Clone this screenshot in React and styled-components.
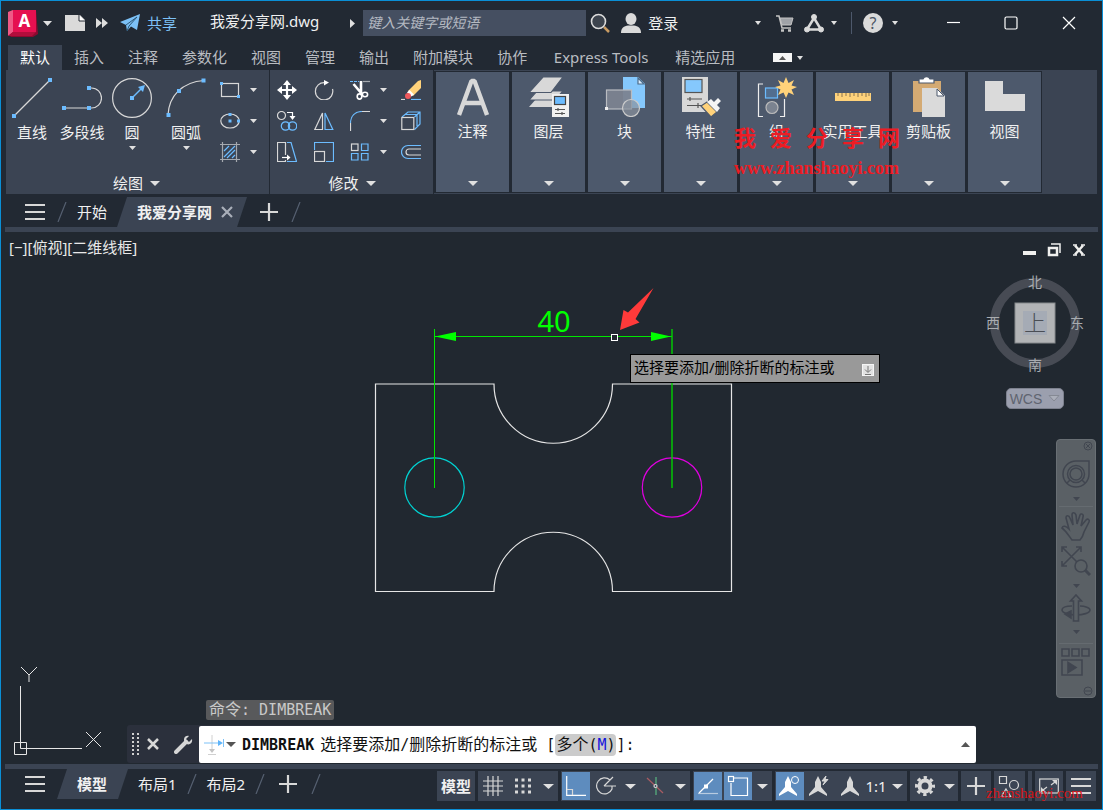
import styled, { createGlobalStyle } from "styled-components";

const GlobalStyle = createGlobalStyle`
  * {
    box-sizing: border-box;
  }
  body {
    margin: 0;
    background-color: #222933;
  }
  button, input {
    font: inherit;
    color: inherit;
    border: none;
    background: none;
    padding: 0;
    margin: 0;
  }
  svg {
    display: block;
    flex: none;
  }
`;

const Window = styled.div`
  min-height: 100vh;
  display: flex;
  flex-direction: column;
  border: 1px solid #0a8fd6;
  background-color: #222933;
  color: #f0f0f0;
  font-family: "Noto Sans", "Noto Sans CJK SC", sans-serif;
  font-size: 15px;
  line-height: 20px;
`;

/* title bar */
const TitleBar = styled.header`
  height: 44px;
  display: flex;
  align-items: center;
  padding: 0 4px 0 7px;
`;
const IconButton = styled.button`
  width: ${(props) => props.$width || 20}px;
  height: ${(props) => props.$height || 30}px;
  flex: none;
  display: flex;
  align-items: center;
  justify-content: center;
`;
const MenuButton = styled(IconButton)`
  padding-left: 12px;
`;
const ShareButton = styled.button`
  display: flex;
  align-items: center;
  gap: 7px;
  padding-left: 10px;
  color: #7cc1f7;
  white-space: nowrap;
`;
const FileName = styled.h1`
  margin: 0 27px 0 33px;
  padding-bottom: 4px;
  font-size: 15px;
  font-weight: 400;
  line-height: 20px;
  white-space: nowrap;
`;
const SearchInput = styled.input`
  flex: 0 1 223px;
  min-width: 80px;
  height: 26px;
  margin: 0 4px 0 5px;
  padding: 0 4px 2px;
  background-color: #454f61;
  font-size: 14px;

  &::placeholder {
    color: #b4b9c1;
    font-style: italic;
    opacity: 1;
  }
`;
const LoginButton = styled.button`
  display: flex;
  align-items: center;
  gap: 7px;
  margin-left: 11px;
  white-space: nowrap;
`;
const TitleRight = styled.div`
  margin-left: auto;
  display: flex;
  align-items: center;
`;
const TitleDivider = styled.span`
  width: 1px;
  height: 22px;
  margin: 0 8px;
  background-color: #4d586b;
`;
const WindowButtons = styled.div`
  display: flex;
  margin-left: 20px;
`;

/* ribbon */
const TabRow = styled.nav`
  height: 25px;
  display: flex;
  align-items: stretch;
  padding-left: 7px;
`;
const RibbonTab = styled.button`
  min-width: ${(props) => (props.$wide ? 124 : 0)}px;
  padding: 0 12px 2px;
  color: ${(props) => (props.$active ? "#ffffff" : "#b9bcc1")};
  background-color: ${(props) => (props.$active ? "#3b4453" : "transparent")};
  white-space: nowrap;
`;
const TabTools = styled.div`
  display: flex;
  align-items: center;
  margin-left: 26px;
`;
const CollapseButton = styled.button`
  width: 19px;
  height: 9px;
  display: flex;
  align-items: center;
  justify-content: center;
  background-color: #f5f5f5;
`;
const Ribbon = styled.section`
  position: relative;
  height: 124px;
  margin: 0 5px;
  display: flex;
  background-color: #3b4453;
`;
const Panel = styled.div`
  display: flex;
  flex-direction: column;
  justify-content: space-between;
  padding: 8px ${(props) => props.$right}px 3px ${(props) => props.$left}px;
  border-right: 1px solid #222933;
`;
const PanelTools = styled.div`
  display: flex;
`;
const PanelTitle = styled.button`
  display: flex;
  align-items: center;
  justify-content: center;
  gap: 7px;
  padding-left: 6px;
`;
const BigTool = styled.button`
  width: ${(props) => props.$width}px;
  display: flex;
  flex-direction: column;
  align-items: center;
  justify-content: flex-start;
  white-space: nowrap;

  span {
    margin: 4px 0;
  }
`;
const ToolGrid = styled.div`
  display: grid;
  grid-template-columns: ${(props) => props.$columns};
  grid-auto-rows: 31px;
  margin-left: ${(props) => props.$offset || 0}px;
  margin-top: 2px;
`;
const SmallTool = styled.button`
  display: flex;
  align-items: flex-start;

  svg + svg {
    margin: 8px 0 0 10px;
  }
`;
const GroupButton = styled.button`
  width: 76px;
  margin: 1px 0;
  padding: 5px 0 6px;
  display: flex;
  flex-direction: column;
  align-items: center;
  background-color: #4d596c;
  border: solid #222933;
  border-width: 1px 1px 1px 2px;
  white-space: nowrap;

  span {
    margin-top: 4px;
  }
  svg:last-child {
    margin-top: auto;
  }
`;
const RibbonMark = styled.div`
  position: absolute;
  top: 55px;
  left: 728px;
  color: #ee1c24;
  font-weight: 700;
  pointer-events: none;
`;
const MarkTitle = styled.div`
  display: flex;
  gap: 14px;
  font-size: 22px;
  line-height: 24px;
`;
const MarkUrl = styled.div`
  margin-top: 9px;
  font-family: "Liberation Serif", serif;
  font-size: 18px;
`;

/* document tabs */
const DocTabs = styled.nav`
  display: flex;
  align-items: center;
  padding-top: ${(props) => props.$top || 0}px;
`;
const SlantTab = styled.div`
  height: 30px;
  display: flex;
  align-items: center;
  gap: 9px;
  padding: 0 ${(props) => props.$right}px 0 20px;
  background-color: #3b4453;
  font-weight: 700;
  clip-path: polygon(10px 0, 100% 0, calc(100% - 10px) 100%, 0 100%);
`;
const PlainTab = styled.button`
  margin: 0 10px;
  white-space: nowrap;
`;
const Strip = styled.div`
  height: 5px;
  margin: 0 4px;
  background-color: #3b4453;
`;

/* drawing area */
const Canvas = styled.main`
  position: relative;
  flex: 1;
  min-height: 532px;
  background-color: #212830;
  overflow: hidden;
`;
const ViewLabel = styled.div`
  padding: 5px 8px;
  color: #e8e8e8;
`;
const Drawing = styled.svg`
  position: absolute;
  left: 359px;
  top: 48px;
`;
const Tooltip = styled.div`
  position: absolute;
  left: 629px;
  top: 122px;
  height: 29px;
  display: flex;
  align-items: center;
  gap: 27px;
  padding: 0 5px 4px 3px;
  border: 1px solid #000;
  background-color: #999;
  color: #000;
  white-space: nowrap;

  svg {
    margin-top: 7px;
  }
`;
const ViewControls = styled.div`
  position: absolute;
  top: 7px;
  right: 11px;
  display: flex;
`;
const ViewCube = styled.div`
  position: absolute;
  top: 40px;
  right: 13px;
  display: flex;
  flex-direction: column;
  align-items: center;
  gap: 12px;
`;
const WcsButton = styled.button`
  width: 58px;
  height: 21px;
  display: flex;
  align-items: center;
  justify-content: center;
  gap: 6px;
  border: 1px solid #7d818e;
  border-radius: 5px;
  background-color: #9b9fae;
  color: #5f6470;
  font-family: "Liberation Sans", sans-serif;
  font-size: 14px;
  line-height: 18px;
`;
const NavBar = styled.aside`
  position: absolute;
  top: 207px;
  right: 6px;
  width: 40px;
  height: 259px;
  display: flex;
  flex-direction: column;
  align-items: center;
  border: 1px solid #696f74;
  border-radius: 4px;
  background-color: #5a6065;
`;
const NavLine = styled.span`
  width: 34px;
  height: 1px;
  margin: 3px 0;
  background-color: #656b70;
`;
const NavEnd = styled.div`
  align-self: flex-end;
  margin-top: ${(props) => (props.$bottom ? "auto" : 0)};
`;
const Ucs = styled.svg`
  position: absolute;
  left: 11px;
  bottom: 4px;
`;
const CommandArea = styled.div`
  position: absolute;
  left: 126px;
  right: 126px;
  bottom: 1px;
  font-family: "DejaVu Sans Mono", "Noto Sans CJK SC", monospace;
`;
const History = styled.div`
  width: max-content;
  margin: 0 0 5px 79px;
  padding: 0 3px;
  border-radius: 2px;
  background-color: #58595b;
  color: #c9c9c9;
`;
const CommandBar = styled.div`
  display: flex;
  height: 38px;
  border-radius: 3px;
  background-color: #2b303c;
`;
const CommandGrip = styled.div`
  width: 72px;
  flex: none;
  display: flex;
  align-items: center;
  padding-left: 5px;
`;
const CommandLine = styled.label`
  flex: 1;
  min-width: 0;
  margin-top: 1px;
  display: flex;
  align-items: center;
  padding: 0 5px;
  border-radius: 2px;
  background-color: #fff;
  color: #111;
  white-space: pre;
`;
const CommandName = styled.b`
  margin-left: 4px;
`;
const Prompt = styled.span`
  margin-left: 6px;
`;
const Cjk = styled.span`
  font-size: 16px;
`;
const Option = styled.button`
  height: 22px;
  padding: 0 1px;
  border-radius: 4px;
  background-color: #cbcbcb;

  b {
    color: #1414dc;
    font-weight: 400;
  }
`;
const CommandInput = styled.input`
  flex: 1;
  min-width: 20px;
  outline: none;
`;

/* status bar */
const StatusBar = styled.footer`
  height: 40px;
  display: flex;
  align-items: flex-start;
  position: relative;
`;
const StatusTools = styled.div`
  display: flex;
  gap: 3px;
  margin: 2px 6px 0 auto;
`;
const StatusGroup = styled.div`
  width: ${(props) => props.$width}px;
  height: 30px;
  display: flex;
  align-items: center;
  justify-content: space-between;
  background-color: #3b4453;
`;
const StatusButton = styled.button`
  width: ${(props) => props.$width || 30}px;
  height: 30px;
  display: flex;
  align-items: center;
  justify-content: center;
  border: 1px solid #3b4453;
  background-color: ${(props) => (props.$active ? "#5e8cbe" : "transparent")};
  font-weight: ${(props) => (props.$bold ? 700 : 400)};
  white-space: nowrap;
`;
const CornerMark = styled.div`
  position: absolute;
  right: 19px;
  top: 14px;
  color: #d81418;
  font-family: "Liberation Serif", serif;
  font-size: 15px;
  pointer-events: none;
`;

const BLUE = "#6cbcff";
const GREY = "#d8d8d8";

const Caret = ({ w = 7, h = 4, color = "#e0e0e0" }) => (
  <svg width={w} height={h} viewBox="0 0 10 5" preserveAspectRatio="none">
    <path d="M0 0H10L5 5Z" fill={color} />
  </svg>
);
const BigCaret = () => <Caret w={11} h={5} />;
const Icon = ({ size = 20, w, h, children }) => (
  <svg width={w || size} height={h || size} fill="none" stroke={GREY} strokeWidth="1.2">
    {children}
  </svg>
);
const Dot = ({ x, y, s = 4 }) => (
  <rect x={x - s / 2} y={y - s / 2} width={s} height={s} fill={BLUE} stroke="none" />
);
const Menu = () => (
  <Icon w={20} h={16}>
    <path d="M0 1H20M0 8H20M0 15H20" strokeWidth="2" />
  </Icon>
);
const Plus = () => (
  <Icon>
    <path d="M10 1V19M1 10H19" strokeWidth="2.2" />
  </Icon>
);
const Slash = () => (
  <Icon w={10} h={20}>
    <path d="M9 0L1 20" stroke="#566071" />
  </Icon>
);

const drawTools = [
  {
    label: "直线",
    width: 50,
    icon: (
      <Icon size={40}>
        <path d="M2 38L38 2" />
        <Dot x={2} y={38} />
        <Dot x={38} y={2} />
      </Icon>
    ),
  },
  {
    label: "多段线",
    width: 50,
    icon: (
      <Icon size={40}>
        <path d="M2 30H29.500A10 10 0 0 0 29.500 10H27" />
        <Dot x={2} y={30} />
        <Dot x={27} y={30} />
        <Dot x={27} y={10} />
      </Icon>
    ),
  },
  {
    label: "圆",
    width: 50,
    menu: true,
    icon: (
      <Icon size={40}>
        <circle cx="20" cy="20" r="19.400" />
        <path d="M20 20L29 11" stroke={BLUE} strokeWidth="1.500" />
        <path d="M33 7L26 9L31 14Z" fill={BLUE} stroke="none" />
        <Dot x={20} y={20} />
      </Icon>
    ),
  },
  {
    label: "圆弧",
    width: 58,
    menu: true,
    icon: (
      <Icon size={40}>
        <path d="M2 37C3 18 16 4 38 2.500" />
        <Dot x={2.500} y={37} />
        <Dot x={13} y={13} />
        <Dot x={37.500} y={2.500} />
      </Icon>
    ),
  },
];

const shapeTools = [
  {
    label: "矩形",
    icon: (
      <Icon>
        <rect x="1.500" y="3.500" width="17" height="13" />
        <Dot x={1.500} y={3.500} s={3} />
        <Dot x={18.500} y={16.500} s={3} />
      </Icon>
    ),
  },
  {
    label: "椭圆",
    icon: (
      <Icon>
        <ellipse cx="10" cy="10" rx="9.200" ry="7" />
        <Dot x={10} y={3.500} s={3} />
        <Dot x={10} y={10} s={3} />
        <Dot x={18.500} y={10} s={3} />
      </Icon>
    ),
  },
  {
    label: "图案填充",
    icon: (
      <Icon>
        <path d="M2.500 0V20M16.500 0V20M0 2.500H20M0 17.500H20" stroke="#a5a9af" />
        <path d="M4 9L9 4M4 15L15 4M7 16L15 8M12 16L15 13" stroke={BLUE} />
      </Icon>
    ),
  },
];

const modifyTools = [
  {
    label: "移动",
    icon: (
      <Icon>
        <path d="M10 3V17M3 10H17" stroke="#fff" strokeWidth="2.200" />
        <path d="M10 0L14 5H6ZM10 20L6 15H14ZM0 10L5 6V14ZM20 10L15 14V6Z" fill="#fff" stroke="none" />
      </Icon>
    ),
  },
  {
    label: "旋转",
    icon: (
      <Icon>
        <path d="M18.500 9A8.700 8.700 0 1 1 11 2.600" />
        <path d="M10 0L15 2.600L10 5.500Z" fill="#fff" stroke="none" />
      </Icon>
    ),
  },
  {
    label: "修剪",
    menu: true,
    icon: (
      <Icon>
        <path d="M0 1.500H9" stroke={BLUE} strokeDasharray="3 1" />
        <path d="M13 1.500H20" stroke="#a5a9af" />
        <path d="M3.500 4L12 14M11 1V13" stroke="#fff" strokeWidth="2.600" />
        <ellipse cx="9.500" cy="16.500" rx="2.300" ry="2.600" stroke="#fff" strokeWidth="1.600" />
        <ellipse cx="15" cy="14.500" rx="2.600" ry="2.200" stroke="#fff" strokeWidth="1.600" />
      </Icon>
    ),
  },
  {
    label: "删除",
    icon: (
      <Icon>
        <path d="M0 19.500H4" />
        <path d="M10 19.500H20" stroke={BLUE} />
        <path d="M20 0V8L12 16L7 11L17 1Z" fill="#ffd27a" stroke="none" />
        <path d="M8.500 10L13 14.500L10.500 16.500L6 12.500Z" fill="#fff" stroke="none" />
        <circle cx="7" cy="16" r="3" fill="#f0595c" stroke="none" />
      </Icon>
    ),
  },
  {
    label: "复制",
    icon: (
      <Icon>
        <circle cx="4.500" cy="4.500" r="4" />
        <path d="M10 1.500H15.500V6" stroke="#fff" />
        <path d="M12.500 5H18.500L15.500 9Z" fill="#fff" stroke="none" />
        <circle cx="8.500" cy="15" r="4.200" stroke={BLUE} />
        <circle cx="15.500" cy="15" r="4.200" stroke={BLUE} />
      </Icon>
    ),
  },
  {
    label: "镜像",
    icon: (
      <Icon>
        <path d="M8.500 2V18.500H.8Z" />
        <path d="M11 2V18.500H18.800Z" stroke={BLUE} />
      </Icon>
    ),
  },
  {
    label: "圆角",
    menu: true,
    icon: (
      <Icon>
        <path d="M.5 20V12M12 .5H20" />
        <path d="M.5 12C.5 5 5 .5 12 .5" stroke={BLUE} />
      </Icon>
    ),
  },
  {
    label: "分解",
    icon: (
      <Icon>
        <path d="M1 6L7 1H19V13L13.500 18.500M13.500 6L19 1M16 4V15M4 3.500H16" stroke={BLUE} />
        <rect x=".8" y="6.500" width="12" height="12" />
      </Icon>
    ),
  },
  {
    label: "拉伸",
    icon: (
      <Icon>
        <path d="M8.500 13V.5H.5V19.500H8.500V18" />
        <path d="M10 .5H14L19.500 19.500H10" stroke={BLUE} />
        <path d="M5 15.500H11" stroke="#fff" />
        <path d="M10 12.500L13.500 15.500L10 18.500Z" fill="#fff" stroke="none" />
      </Icon>
    ),
  },
  {
    label: "缩放",
    icon: (
      <Icon>
        <path d="M.5 8V.5H19.500V19.500H12" stroke={BLUE} />
        <rect x=".5" y="9.500" width="10" height="10" />
      </Icon>
    ),
  },
  {
    label: "阵列",
    menu: true,
    icon: (
      <Icon>
        <rect x="1.500" y="2" width="6.500" height="6.500" />
        <path d="M11.500 2H18V8.500H11.500ZM1.500 11.500H8V18H1.500ZM11.500 11.500H18V18H11.500Z" stroke={BLUE} />
      </Icon>
    ),
  },
  {
    label: "偏移",
    icon: (
      <Icon>
        <path d="M20 3.500H7A6.500 6.500 0 0 0 7 16.500H20" stroke={BLUE} />
        <path d="M20 7H8A3 3 0 0 0 8 13H20" />
      </Icon>
    ),
  },
];

const groups = [
  {
    label: "注释",
    icon: (
      <Icon size={40}>
        <path d="M6 38L18.500 4H21.500L34 38M10 26H30" strokeWidth="4.400" strokeLinejoin="bevel" />
      </Icon>
    ),
  },
  {
    label: "图层",
    icon: (
      <Icon size={40}>
        <g fill={GREY} stroke="none">
          <path d="M0 30L8 21H33L24 30Z" />
          <path d="M0 23L8 14H34L26 23Z" stroke="#4d596c" />
          <path d="M0 15.500L14 0H34L22 15.500Z" stroke="#4d596c" />
        </g>
        <rect x="23" y="17" width="17" height="23" fill="#f1f1f1" stroke="none" />
        <rect x="25.500" y="19.500" width="11" height="8" fill={BLUE} stroke="#444" />
        <path d="M26 32.500H36M26 36.500H36M29 31V34M33 35V38" stroke="#555" />
      </Icon>
    ),
  },
  {
    label: "块",
    icon: (
      <Icon size={40}>
        <path d="M18 0H33L40 7V31H18Z" fill="#85c8fd" stroke="none" />
        <path d="M33 1V7H39Z" fill="#d9edff" stroke="#4d6b88" />
        <rect x="1.500" y="13" width="25" height="19" fill="#7b8390" fillOpacity=".95" stroke="#b9bcc1" />
        <circle cx="26" cy="31" r="8.500" fill="#89919c" fillOpacity=".7" stroke="#ccc" />
        <rect x="0" y="30" width="3" height="3" fill="#eee" stroke="none" />
      </Icon>
    ),
  },
  {
    label: "特性",
    icon: (
      <Icon size={40}>
        <rect x="1" y="0" width="26" height="35" fill={GREY} stroke="none" />
        <rect x="4" y="2.500" width="17" height="13" fill="#85c8fd" stroke="#555" />
        <path d="M6 22H21M6 28.500H21M9 20V24M17 26V31" stroke="#555" />
        <path d="M20 29L26 25L36 35L30 40Z" fill="#ffd27a" stroke="#4d596c" />
        <path d="M26 25L30 22L33 25L37 21L40 24L36 28L39 31L36 35Z" fill="#f4f4f4" stroke="none" />
      </Icon>
    ),
  },
  {
    label: "组",
    icon: (
      <Icon size={40}>
        <path d="M6 7H1.500V39.500H6M23 39.500H27.500V22" stroke="#eee" />
        <rect x="8.500" y="11" width="12" height="10" fill="#526e8f" stroke={BLUE} />
        <circle cx="15" cy="30.500" r="6" fill="#7b8390" stroke="#bbb" />
        <path d="M29 0L31.500 6L37 3L34.500 8.500L40 10L34.500 12.500L37 18L31.500 15.500L29 21L26.500 15.500L21 18L23.500 12.500L18 10L23.500 8.500L21 3L26.500 6Z" fill="#ffd27a" stroke="none" />
      </Icon>
    ),
  },
  {
    label: "实用工具",
    icon: (
      <Icon size={40}>
        <rect x="2" y="16" width="36" height="8" fill="#ffd27a" stroke="none" />
        <path d="M5 16V19M9 16V20M13 16V19M17 16V20M21 16V19M25 16V20M29 16V19M33 16V20M36 16V19" stroke="#8b7550" strokeWidth="1" />
      </Icon>
    ),
  },
  {
    label: "剪贴板",
    icon: (
      <Icon size={40}>
        <rect x="4" y="4" width="28" height="31" fill="#d4aa73" stroke="none" />
        <path d="M10 6V2H14C15 -1 20 -1 21 2H25V6Z" fill="#fff" stroke="#4d596c" />
        <path d="M13 11H28L36 19V40H13Z" fill="#dadada" stroke="none" />
        <path d="M28 12V19H35Z" fill="#fff" stroke="#4d596c" strokeWidth="1" />
      </Icon>
    ),
  },
  {
    label: "视图",
    icon: (
      <Icon size={40}>
        <path d="M0 4H18V17H40V34H0Z" fill="#dadada" stroke="none" />
      </Icon>
    ),
  },
];

const tabs = ["默认", "插入", "注释", "参数化", "视图", "管理", "输出", "附加模块", "协作", "Express Tools", "精选应用"];

const Title = () => (
  <TitleBar>
    <IconButton $width={30} aria-label="应用程序菜单">
      <svg width="30" height="28">
        <path d="M5 1H28L30 25L25 28H3L0 25V3Z" fill="#8d0930" />
        <path d="M0 3L5 1V23L0 27Z" fill="#ef5a86" />
        <path d="M0 27L5 23H28L24 27Z" fill="#b30d3c" />
        <rect x="5" y="1" width="23" height="22" fill="#e51050" />
        <text x="16.500" y="18" fill="#fff" fontSize="17" fontWeight="700" textAnchor="middle">
          A
        </text>
      </svg>
    </IconButton>
    <IconButton $width={18} aria-label="展开">
      <Caret w={9} h={5} />
    </IconButton>
    <IconButton $width={38} aria-label="新建">
      <svg width="20" height="16">
        <path d="M0 0H15L20 5V16H0Z" fill="#dadada" />
        <path d="M14 0V6H20" fill="#fff" stroke="#222933" />
      </svg>
    </IconButton>
    <IconButton $width={16} aria-label="更多">
      <svg width="12" height="10">
        <path d="M0 0L6 5L0 10ZM6 0L12 5L6 10Z" fill="#ddd" />
      </svg>
    </IconButton>
    <ShareButton>
      <svg width="20" height="18">
        <path d="M0 8L20 0L17 16L11 12.500L7 17L6 11Z" fill="#7cc1f7" />
        <path d="M6 11L17 3L9 12L7 17" fill="none" stroke="#2d5878" />
      </svg>
      共享
    </ShareButton>
    <FileName>我爱分享网.dwg</FileName>
    <IconButton $width={12} aria-label="展开搜索">
      <svg width="5" height="9">
        <path d="M0 0L5 4.500L0 9Z" fill="#e0e0e0" />
      </svg>
    </IconButton>
    <SearchInput type="text" placeholder="键入关键字或短语" aria-label="搜索" />
    <IconButton aria-label="搜索">
      <svg width="20" height="20" fill="none">
        <path d="M14 14L19 19" stroke="#c99b62" strokeWidth="2.500" />
        <circle cx="8.500" cy="8.500" r="7" fill="#3d444e" stroke="#dcdcdc" strokeWidth="1.600" />
      </svg>
    </IconButton>
    <LoginButton>
      <svg width="20" height="20" fill="#dadada">
        <ellipse cx="10" cy="6" rx="5.500" ry="6" />
        <path d="M0 20C0 15 3 13 7 12.500H13C17 13 20 15 20 20Z" />
      </svg>
      登录
    </LoginButton>
    <TitleRight>
      <IconButton $width={18} aria-label="登录选项">
        <Caret w={6} h={4} />
      </IconButton>
      <IconButton $width={36} aria-label="应用商店">
        <svg width="18" height="17" fill="none" stroke="#c4c4c4">
          <path d="M0 1H3L6 13H15" strokeWidth="1.500" />
          <path d="M4 3H17L15 10H6Z" fill="#a0a3a8" />
          <path d="M5 15.500H8M12 15.500H15" strokeWidth="2.500" />
        </svg>
      </IconButton>
      <IconButton $width={22} aria-label="Autodesk App">
        <svg width="20" height="19" fill="#dadada" stroke="#dadada">
          <path d="M10 4L3 15.500H17Z" fill="none" strokeWidth="2.500" />
          <circle cx="10" cy="3" r="2.500" />
          <circle cx="3" cy="15.500" r="2.500" />
          <circle cx="17" cy="15.500" r="2.500" />
        </svg>
      </IconButton>
      <IconButton $width={18} aria-label="展开">
        <Caret w={6} h={4} />
      </IconButton>
      <TitleDivider />
      <IconButton $width={26} aria-label="帮助">
        <svg width="20" height="20">
          <circle cx="10" cy="10" r="10" fill="#dadada" />
          <text x="10" y="16" fill="#4b5563" fontSize="16" textAnchor="middle">
            ?
          </text>
        </svg>
      </IconButton>
      <IconButton $width={18} aria-label="帮助选项">
        <Caret w={6} h={4} />
      </IconButton>
      <WindowButtons>
        <IconButton $width={58} aria-label="最小化">
          <Icon size={14}>
            <path d="M1 6.500H14" stroke="#fff" />
          </Icon>
        </IconButton>
        <IconButton $width={58} aria-label="最大化">
          <Icon size={14}>
            <rect x="1" y="1" width="12" height="12" rx="1.500" stroke="#fff" />
          </Icon>
        </IconButton>
        <IconButton $width={58} aria-label="关闭">
          <Icon size={14}>
            <path d="M1 1L13 13M13 1L1 13" stroke="#fff" />
          </Icon>
        </IconButton>
      </WindowButtons>
    </TitleRight>
  </TitleBar>
);

const RibbonArea = () => (
  <Ribbon>
    <Panel $left={1} $right={9}>
      <PanelTools>
        {drawTools.map((tool) => (
          <BigTool key={tool.label} $width={tool.width}>
            {tool.icon}
            <span>{tool.label}</span>
            {tool.menu && <Caret />}
          </BigTool>
        ))}
        <ToolGrid $columns="40px" $offset={5}>
          {shapeTools.map((tool) => (
            <SmallTool key={tool.label} aria-label={tool.label}>
              {tool.icon}
              <Caret />
            </SmallTool>
          ))}
        </ToolGrid>
      </PanelTools>
      <PanelTitle>
        绘图
        <Caret w={10} h={5} />
      </PanelTitle>
    </Panel>
    <Panel $left={7} $right={12}>
      <ToolGrid $columns="37px 36px 51px 20px">
        {modifyTools.map((tool) => (
          <SmallTool key={tool.label} aria-label={tool.label}>
            {tool.icon}
            {tool.menu && <Caret />}
          </SmallTool>
        ))}
      </ToolGrid>
      <PanelTitle>
        修改
        <Caret w={10} h={5} />
      </PanelTitle>
    </Panel>
    {groups.map((group) => (
      <GroupButton key={group.label}>
        {group.icon}
        <span>{group.label}</span>
        <Caret w={10} h={5} />
      </GroupButton>
    ))}
    <RibbonMark>
      <MarkTitle>
        <span>我</span>
        <span>爱</span>
        <span>分</span>
        <span>享</span>
        <span>网</span>
      </MarkTitle>
      <MarkUrl>www.zhanshaoyi.com</MarkUrl>
    </RibbonMark>
  </Ribbon>
);

const NAV = "#414650";

const Navigation = () => (
  <NavBar>
    <NavEnd>
      <IconButton $width={14} $height={12} aria-label="关闭导航栏">
        <svg width="10" height="10" fill="none" stroke={NAV}>
          <circle cx="5" cy="5" r="4" />
          <path d="M3 3L7 7M7 3L3 7" />
        </svg>
      </IconButton>
    </NavEnd>
    <IconButton $width={36} $height={43} aria-label="全导航控制盘">
      <svg width="28" height="28" fill="none" stroke={NAV} strokeWidth="1.500">
        <path d="M14 1H27V14A13 13 0 1 1 14 1Z" />
        <circle cx="14" cy="14" r="8.500" />
        <circle cx="14" cy="14" r="6" />
        <path d="M5 23L8 20M23 23L20 20" />
      </svg>
    </IconButton>
    <IconButton $width={36} $height={8} aria-label="控制盘选项">
      <Caret w={7} h={4} color={NAV} />
    </IconButton>
    <NavLine />
    <IconButton $width={36} $height={32} aria-label="平移">
      <svg width="30" height="30" fill="none" stroke={NAV} strokeWidth="1.600">
        <path d="M11 29C8 25 5 20 1 17C2 14 5 15 8 18L5 7C5 4 8 4 9 7L12 14L11 4C11 1 14 1 15 4L16 13L19 4C20 2 23 3 22 6L20 15L25 9C27 7 29 9 28 11L23 21C22 25 21 27 19 29Z" />
      </svg>
    </IconButton>
    <IconButton $width={36} $height={38} aria-label="范围缩放">
      <svg width="30" height="30" fill="none" stroke={NAV} strokeWidth="1.600">
        <path d="M1 1L20 20M20 1L1 20M1 6V1H6M15 1H20V6M1 15V20H6" />
        <circle cx="20" cy="20" r="6" fill="#5a6065" />
        <path d="M24 24L29 29" strokeWidth="3" />
      </svg>
    </IconButton>
    <IconButton $width={36} $height={12} aria-label="缩放选项">
      <Caret w={7} h={4} color={NAV} />
    </IconButton>
    <IconButton $width={36} $height={32} aria-label="动态观察">
      <svg width="30" height="28" fill="none" stroke={NAV} strokeWidth="1.600">
        <path d="M11 12C4 12 1 14 1 16C1 19 9 21 15 21C22 21 29 19 29 16C29 14 24 12 19 12" />
        <path d="M12.500 27V7H9.500L15 1L20.500 7H17.500V27Z" fill="#5a6065" />
        <path d="M10 17L4 20L10 24Z" fill={NAV} />
      </svg>
    </IconButton>
    <IconButton $width={36} $height={16} aria-label="动态观察选项">
      <Caret w={7} h={4} color={NAV} />
    </IconButton>
    <NavLine />
    <IconButton $width={36} $height={30} aria-label="ShowMotion">
      <svg width="30" height="30" fill="none" stroke={NAV} strokeWidth="1.600">
        <path d="M1 2H8V9H1ZM11 2H18V9H11ZM21 2H28V9H21ZM1 13H21V28H1Z" />
        <path d="M7 15.500L15 20.500L7 25.500Z" fill={NAV} />
      </svg>
    </IconButton>
    <NavEnd $bottom>
      <IconButton $width={14} $height={12} aria-label="导航栏选项">
        <svg width="10" height="10" fill="none" stroke={NAV}>
          <circle cx="5" cy="5" r="4" />
          <path d="M2 5H8" />
        </svg>
      </IconButton>
    </NavEnd>
  </NavBar>
);

const Command = () => (
  <CommandArea>
    <History>
      <Cjk>命令</Cjk>: DIMBREAK
    </History>
    <CommandBar>
      <CommandGrip>
        <svg width="8" height="22">
          <path d="M1 0V22M6 0V22" stroke="#d0d0d0" strokeWidth="2" strokeDasharray="2 2" />
        </svg>
        <IconButton $width={26} aria-label="关闭命令行">
          <Icon size={12}>
            <path d="M1 1L11 11M11 1L1 11" strokeWidth="2.500" />
          </Icon>
        </IconButton>
        <IconButton $width={36} aria-label="自定义">
          <svg width="20" height="20" fill="none">
            <path d="M2 18L12 8" stroke="#d6d6d6" strokeWidth="4" strokeLinecap="round" />
            <path d="M15 2C10 1 9 6 11 9C14 12 19 10 18 5L15 8L12 5Z" fill="#d6d6d6" />
          </svg>
        </IconButton>
      </CommandGrip>
      <CommandLine>
        <svg width="20" height="20" fill="none">
          <path d="M8 0V15M4 19.500H12" stroke="#d0d0d0" />
          <path d="M5 14H11L8 18Z" fill="#c4c4c4" />
          <path d="M0 8H14M19.500 4V12" stroke="#7cc1f7" />
          <path d="M14 5L19 8L14 11Z" fill="#5eb4fa" />
        </svg>
        <IconButton $width={14} aria-label="最近使用的命令">
          <Caret w={10} h={5} color="#555" />
        </IconButton>
        <CommandName>DIMBREAK</CommandName>
        <Prompt>
          <Cjk>选择要添加</Cjk>/<Cjk>删除折断的标注或</Cjk>
          {" ["}
        </Prompt>
        <Option>
          <Cjk>多个</Cjk>(<b>M</b>)
        </Option>
        ]:
        <CommandInput type="text" aria-label="命令输入" />
        <IconButton $width={12} aria-label="命令历史">
          <svg width="9" height="5">
            <path d="M0 5L4.500 0L9 5Z" fill="#555" />
          </svg>
        </IconButton>
      </CommandLine>
    </CommandBar>
  </CommandArea>
);

const DrawingArea = () => (
  <Canvas>
    <ViewLabel>[−][俯视][二维线框]</ViewLabel>
    <Drawing width="380" height="320" viewBox="360 280 380 320" fill="none">
      <path
        d="M375.500 384H494A59.250 59.250 0 0 0 612.500 384H731.500V591.500H612.500A59.250 59.250 0 0 0 494 591.500H375.500Z"
        stroke="#e6e6e6"
        strokeWidth="1.200"
      />
      <circle cx="434.500" cy="487.500" r="29.700" stroke="#00d2d2" strokeWidth="1.200" />
      <circle cx="672" cy="487.500" r="29.700" stroke="#e000e0" strokeWidth="1.200" />
      <path d="M434.500 329V488M434.500 336.500H672" stroke="#00e600" />
      <path d="M672 329V488" stroke="#00d200" strokeWidth="1.400" />
      <path d="M435 336.500L456 332V341ZM671 336.500L651 332V341Z" fill="#00ff00" />
      <text x="554" y="332" fill="#00ff00" fontSize="29" textAnchor="middle">
        40
      </text>
      <rect x="611.500" y="334.500" width="6" height="6" fill="#212830" stroke="#fff" />
      <path d="M620 330L623.500 310L628 312.500L653.500 288L635.500 319L639.500 322.500Z" fill="#ff3a3a" />
    </Drawing>
    <Tooltip>
      选择要添加/删除折断的标注或
      <svg width="12" height="12" fill="none">
        <rect x=".5" y=".5" width="11" height="11" fill="#e2e2e2" stroke="#f5f5f5" />
        <path d="M6 2V8M3 5.500L6 8.500L9 5.500M3 10.500H9" stroke="#777" />
      </svg>
    </Tooltip>
    <ViewControls>
      <IconButton $width={25} $height={22} aria-label="最小化视口">
        <svg width="14" height="14">
          <rect x="1" y="8" width="13" height="4" fill="#f0f0ee" />
        </svg>
      </IconButton>
      <IconButton $width={25} $height={22} aria-label="还原视口">
        <svg width="14" height="14" fill="none" stroke="#f0f0ee">
          <path d="M4 1H13V10" strokeWidth="1.500" />
          <rect x="2" y="5" width="8" height="7" strokeWidth="2.500" />
        </svg>
      </IconButton>
      <IconButton $width={25} $height={22} aria-label="关闭视口">
        <svg width="14" height="14" fill="none" stroke="#f0f0ee">
          <path d="M3 2.500L11 11.500M11 2.500L3 11.500" strokeWidth="2.500" />
          <path d="M1 2H5M9 2H13M1 12H5M9 12H13" strokeWidth="1.500" />
        </svg>
      </IconButton>
    </ViewControls>
    <ViewCube>
      <svg width="108" height="104" fill="#a9acb0" fontSize="14" textAnchor="middle">
        <circle cx="54" cy="51" r="40.500" fill="none" stroke="#474b54" strokeWidth="9" />
        <rect x="34" y="31" width="40" height="40" fill="#b2b4b6" stroke="#86898c" />
        <rect x="42" y="39" width="24" height="24" fill="#a5abb5" />
        <text x="54" y="59" fontSize="22" fontWeight="300" fill="#4a4e55">
          上
        </text>
        <text x="54" y="15">北</text>
        <text x="12" y="56">西</text>
        <text x="96" y="56">东</text>
        <text x="54" y="98">南</text>
      </svg>
      <WcsButton>
        WCS
        <svg width="12" height="7">
          <path d="M1 .5H11L6 6Z" fill="#abafba" stroke="#858994" />
        </svg>
      </WcsButton>
    </ViewCube>
    <Navigation />
    <Ucs width="96" height="94" fill="none" stroke="#e6e6e6">
      <path d="M8.500 20V82.500H70M2.500 76.500H14.500V88.500H2.500Z" />
      <path d="M9 1L17 9L25 1M17 9V16M74 66L89 81M89 66L74 81" />
    </Ucs>
    <Command />
  </Canvas>
);

const Person = ({ mark, color = GREY }) => (
  <svg width="22" height="22" fill="none" stroke={color}>
    <path d="M9 1L12 7V12L18 19V21L9 16L0 21V19L6 12V7Z" fill={color} stroke="none" />
    {mark}
  </svg>
);

const Status = () => (
  <StatusBar>
    <DocTabs>
      <MenuButton $width={56} aria-label="布局菜单">
        <Menu />
      </MenuButton>
      <SlantTab $right={21}>模型</SlantTab>
      <PlainTab>布局1</PlainTab>
      <Slash />
      <PlainTab>布局2</PlainTab>
      <Slash />
      <IconButton $width={46} aria-label="新建布局">
        <Plus />
      </IconButton>
      <Slash />
    </DocTabs>
    <StatusTools>
      <StatusGroup $width={38}>
        <StatusButton $width={38} $bold>
          模型
        </StatusButton>
      </StatusGroup>
      <StatusGroup $width={80}>
        <StatusButton aria-label="栅格">
          <Icon>
            <path d="M5 0V20M10 0V20M15 0V20M0 5H20M0 10H20M0 15H20" />
          </Icon>
        </StatusButton>
        <StatusButton aria-label="捕捉">
          <Icon size={16}>
            <path d="M0 2H16M0 8H16M0 14H16" strokeWidth="3" strokeDasharray="3 3.500" />
          </Icon>
        </StatusButton>
        <StatusButton $width={20} aria-label="捕捉选项">
          <BigCaret />
        </StatusButton>
      </StatusGroup>
      <StatusGroup $width={129}>
        <StatusButton $active aria-label="正交">
          <Icon>
            <path d="M.7 0V19.300H20" stroke="#fff" />
            <path d="M1 13.500H6.500V19" />
          </Icon>
        </StatusButton>
        <StatusButton aria-label="极轴追踪">
          <Icon>
            <path d="M14 4A8 8 0 1 0 16 13V10M8 10H20M8 10L17 1" />
          </Icon>
        </StatusButton>
        <StatusButton $width={20} aria-label="极轴选项">
          <BigCaret />
        </StatusButton>
        <StatusButton aria-label="等轴测草图">
          <Icon>
            <path d="M2 2L18 17" stroke="#a85c62" />
            <path d="M11 1V19" stroke="#59b881" />
            <circle cx="10.500" cy="10" r="1.500" fill="#3b4453" />
          </Icon>
        </StatusButton>
        <StatusButton $width={20} aria-label="等轴测选项">
          <BigCaret />
        </StatusButton>
      </StatusGroup>
      <StatusGroup $width={79}>
        <StatusButton $active aria-label="对象捕捉追踪">
          <Icon>
            <path d="M0 17.500H20" stroke="#b8cbe0" />
            <path d="M1 17L15 3" stroke="#fff" />
            <rect x="6" y="8.500" width="4" height="4" fill="#fff" stroke="none" />
          </Icon>
        </StatusButton>
        <StatusButton $active aria-label="对象捕捉">
          <Icon size={22}>
            <path d="M7 3H20.500V20.500H4V8" stroke="#fff" />
            <rect x="1.500" y="1.500" width="5" height="5" stroke="#fff" />
          </Icon>
        </StatusButton>
        <StatusButton $width={19} aria-label="捕捉设置">
          <BigCaret />
        </StatusButton>
      </StatusGroup>
      <StatusGroup $width={132}>
        <StatusButton $active aria-label="注释可见性">
          <Person color="#fff" mark={<circle cx="16" cy="5" r="3.500" />} />
        </StatusButton>
        <StatusButton aria-label="自动缩放">
          <Person mark={<path d="M17 1L13 6H16L14 10L19 4.500H16Z" fill={GREY} />} />
        </StatusButton>
        <StatusButton aria-label="注释比例">
          <svg width="18" height="22">
            <path d="M9 1L12 7V12L18 19V21L9 16L0 21V19L6 12V7Z" fill={GREY} />
          </svg>
        </StatusButton>
        <StatusButton $width={22}>1:1</StatusButton>
        <StatusButton $width={20} aria-label="比例列表">
          <BigCaret />
        </StatusButton>
      </StatusGroup>
      <StatusGroup $width={48}>
        <StatusButton aria-label="切换工作空间">
          <svg width="20" height="20" fill="none" stroke={GREY}>
            <circle cx="10" cy="10" r="5.500" strokeWidth="4" />
            <circle cx="10" cy="10" r="8.500" strokeWidth="3" strokeDasharray="3.340 3.340" strokeDashoffset="1.670" />
          </svg>
        </StatusButton>
        <StatusButton $width={18} aria-label="工作空间选项">
          <BigCaret />
        </StatusButton>
      </StatusGroup>
      <StatusGroup $width={30}>
        <StatusButton aria-label="注释监视器">
          <Plus />
        </StatusButton>
      </StatusGroup>
      <StatusGroup $width={31}>
        <StatusButton aria-label="隔离对象">
          <Icon size={22}>
            <path d="M1.500 1.500H8.500V8.500H1.500ZM8 14L13 22H3Z" />
            <circle cx="16" cy="10" r="4.500" />
          </Icon>
        </StatusButton>
      </StatusGroup>
      <StatusGroup $width={4} />
      <StatusGroup $width={28}>
        <StatusButton $width={28} aria-label="全屏显示">
          <Icon w={20} h={16}>
            <rect x=".7" y="1" width="18.600" height="14" />
            <path d="M18 2V7L13 2ZM2 14V9L7 14Z" fill={GREY} stroke="none" />
            <path d="M16 4L12 7M4 12L8 9" />
          </Icon>
        </StatusButton>
      </StatusGroup>
      <StatusGroup $width={30}>
        <StatusButton aria-label="自定义">
          <Menu />
        </StatusButton>
      </StatusGroup>
    </StatusTools>
    <CornerMark>zhanshaoyi.com</CornerMark>
  </StatusBar>
);

const App = () => {
  return (
    <Window>
      <GlobalStyle />
      <Title />
      <TabRow>
        {tabs.map((tab, i) => (
          <RibbonTab key={tab} $active={i === 0} $wide={tab === "Express Tools"}>
            {tab}
          </RibbonTab>
        ))}
        <TabTools>
          <CollapseButton aria-label="最小化功能区">
            <svg width="7" height="4">
              <path d="M0 4L3.500 0L7 4Z" fill="#555" />
            </svg>
          </CollapseButton>
          <IconButton $width={16} $height={20} aria-label="功能区选项">
            <Caret w={6} h={4} />
          </IconButton>
        </TabTools>
      </TabRow>
      <RibbonArea />
      <DocTabs $top={3}>
        <MenuButton $width={56} aria-label="文件菜单">
          <Menu />
        </MenuButton>
        <Slash />
        <PlainTab>开始</PlainTab>
        <SlantTab $right={14}>
          我爱分享网
          <IconButton $width={12} aria-label="关闭文件">
            <Icon size={12}>
              <path d="M1 1L11 11M11 1L1 11" stroke="#a9afb9" strokeWidth="2.200" />
            </Icon>
          </IconButton>
        </SlantTab>
        <IconButton $width={44} aria-label="新建图形">
          <Plus />
        </IconButton>
        <Slash />
      </DocTabs>
      <Strip />
      <DrawingArea />
      <Strip />
      <Status />
    </Window>
  );
};

export default App;
